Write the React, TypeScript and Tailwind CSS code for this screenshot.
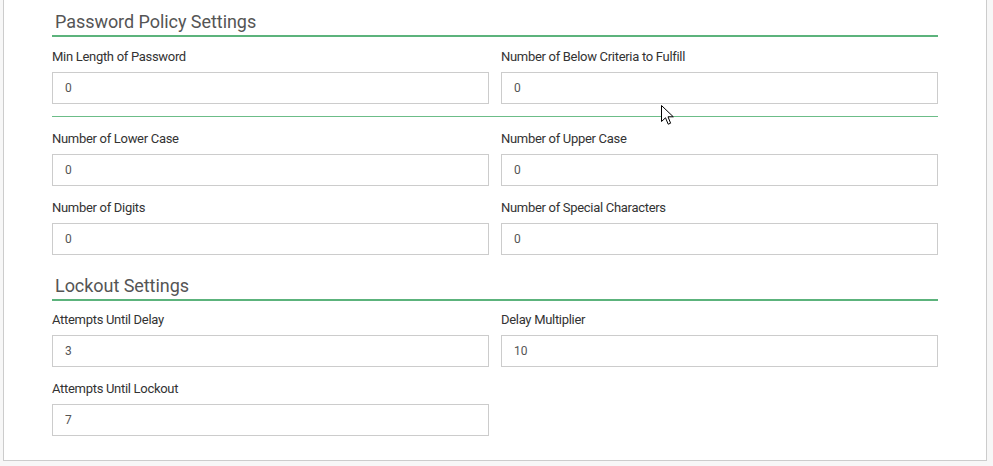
import React from "react";

type Field = { label: string; value: string };

const font = { fontFamily: "Roboto, 'Liberation Sans', sans-serif" };

function Heading({ title, gap }: { title: string; gap: string }) {
  return (
    <div className={`pt-[7px] pb-[1px] border-b-2 border-[#5cb37c] ${gap}`}>
      <h3 className="pl-[3px] text-[18px] leading-[24px] tracking-[-0.05px] font-normal text-[#555]">{title}</h3>
    </div>
  );
}

function FormField({ field }: { field: Field }) {
  return (
    <div className="mb-[12px]">
      <label className="block text-[13px] leading-[20px] tracking-[-0.3px] text-[#333] mb-[5px]">{field.label}</label>
      <input
        readOnly
        value={field.value}
        className="block w-full h-[32px] px-[12px] border border-[#ccc] bg-white text-[12px] text-[#555] outline-none"
        style={font}
      />
    </div>
  );
}

function Row({ fields }: { fields: (Field | null)[] }) {
  return (
    <div className="grid grid-cols-2 gap-x-[12px]">
      {fields.map((f, i) => (f ? <FormField key={i} field={f} /> : <div key={i} />))}
    </div>
  );
}

function Cursor() {
  return (
    <svg className="absolute left-[661px] top-[105px]" width="14" height="21" viewBox="0 0 14 21">
      <path
        d="M0.5 0.5 L0.5 16.5 L4.5 12.8 L7.2 19.2 L9.6 18.2 L7 11.8 L12.3 11.8 Z"
        fill="#fff"
        stroke="#000"
        strokeWidth="1"
        strokeLinejoin="round"
      />
    </svg>
  );
}

export default function App() {
  return (
    <div className="relative h-[466px] w-[993px] bg-[#f7f7f7] pl-[3px] pr-[6px]" style={font}>
      <div className="bg-white border-l border-r border-b border-[#ccc] pl-[48px] pr-[48px] pt-[3px] pb-[12px]">
        {/* Password policy */}
        <Heading title="Password Policy Settings" gap="mb-[10px]" />
        <Row
          fields={[
            { label: "Min Length of Password", value: "0" },
            { label: "Number of Below Criteria to Fulfill", value: "0" },
          ]}
        />
        <div className="border-t border-[#6cbd88] mb-[12px]" />
        <Row
          fields={[
            { label: "Number of Lower Case", value: "0" },
            { label: "Number of Upper Case", value: "0" },
          ]}
        />
        <Row
          fields={[
            { label: "Number of Digits", value: "0" },
            { label: "Number of Special Characters", value: "0" },
          ]}
        />

        {/* Lockout */}
        <Heading title="Lockout Settings" gap="mb-[9px]" />
        <Row
          fields={[
            { label: "Attempts Until Delay", value: "3" },
            { label: "Delay Multiplier", value: "10" },
          ]}
        />
        <Row fields={[{ label: "Attempts Until Lockout", value: "7" }, null]} />
      </div>
      <Cursor />
    </div>
  );
}
